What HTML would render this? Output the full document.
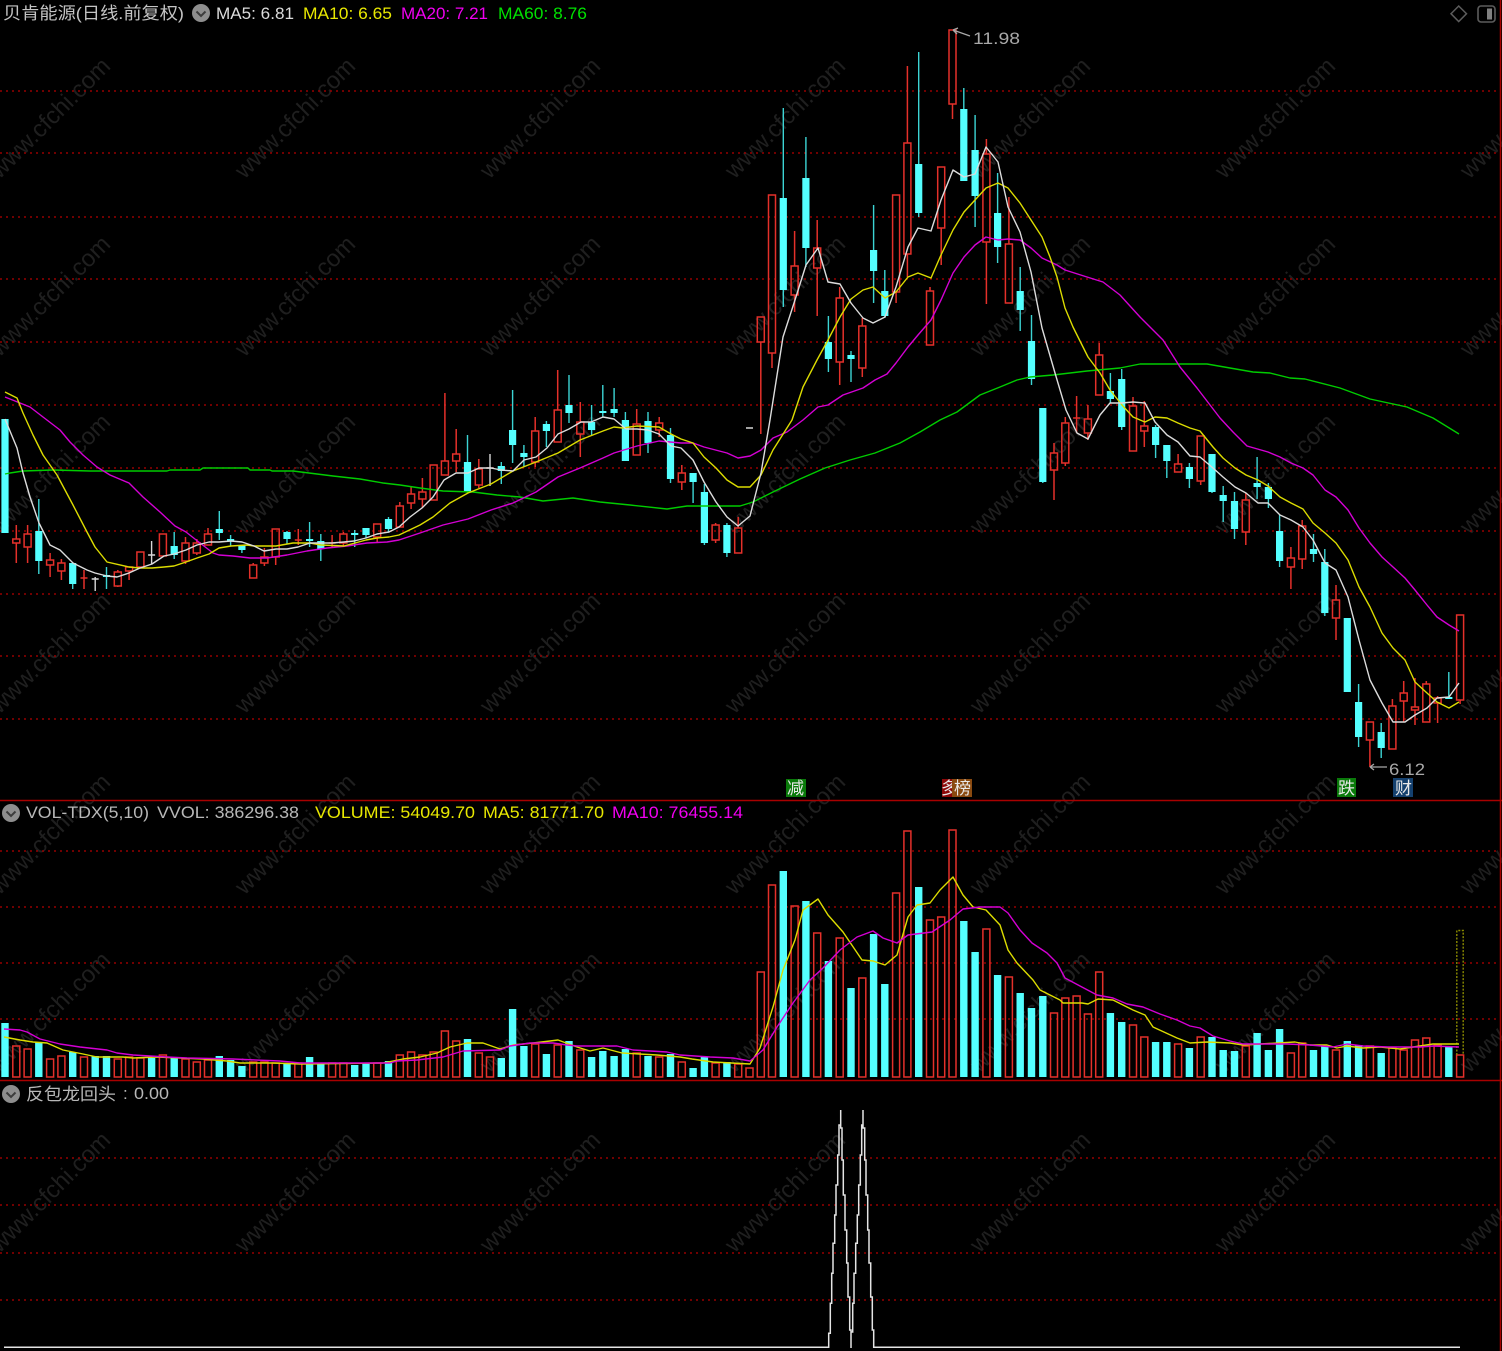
<!DOCTYPE html>
<html lang="zh">
<head>
<meta charset="utf-8">
<title>贝肯能源</title>
<style>
html,body{margin:0;padding:0;background:#000;width:1502px;height:1351px;overflow:hidden}
svg{display:block}
text{font-family:"Liberation Sans","Noto Sans CJK SC",sans-serif;font-size:17px}
.w{font-size:24px;fill:#1f1f1f}
path{fill:none}
</style>
</head>
<body>
<svg width="1502" height="1351" viewBox="0 0 1502 1351" xmlns="http://www.w3.org/2000/svg">
<rect width="1502" height="1351" fill="#000"/>
<!-- watermarks -->
<g transform="translate(-5 0)">
<g transform="translate(55 118) rotate(-45)"><text class="w" text-anchor="middle" y="8">www.cfchi.com</text></g>
<g transform="translate(300 118) rotate(-45)"><text class="w" text-anchor="middle" y="8">www.cfchi.com</text></g>
<g transform="translate(545 118) rotate(-45)"><text class="w" text-anchor="middle" y="8">www.cfchi.com</text></g>
<g transform="translate(790 118) rotate(-45)"><text class="w" text-anchor="middle" y="8">www.cfchi.com</text></g>
<g transform="translate(1035 118) rotate(-45)"><text class="w" text-anchor="middle" y="8">www.cfchi.com</text></g>
<g transform="translate(1280 118) rotate(-45)"><text class="w" text-anchor="middle" y="8">www.cfchi.com</text></g>
<g transform="translate(1525 118) rotate(-45)"><text class="w" text-anchor="middle" y="8">www.cfchi.com</text></g>
<g transform="translate(55 296) rotate(-45)"><text class="w" text-anchor="middle" y="8">www.cfchi.com</text></g>
<g transform="translate(300 296) rotate(-45)"><text class="w" text-anchor="middle" y="8">www.cfchi.com</text></g>
<g transform="translate(545 296) rotate(-45)"><text class="w" text-anchor="middle" y="8">www.cfchi.com</text></g>
<g transform="translate(790 296) rotate(-45)"><text class="w" text-anchor="middle" y="8">www.cfchi.com</text></g>
<g transform="translate(1035 296) rotate(-45)"><text class="w" text-anchor="middle" y="8">www.cfchi.com</text></g>
<g transform="translate(1280 296) rotate(-45)"><text class="w" text-anchor="middle" y="8">www.cfchi.com</text></g>
<g transform="translate(1525 296) rotate(-45)"><text class="w" text-anchor="middle" y="8">www.cfchi.com</text></g>
<g transform="translate(55 474) rotate(-45)"><text class="w" text-anchor="middle" y="8">www.cfchi.com</text></g>
<g transform="translate(300 474) rotate(-45)"><text class="w" text-anchor="middle" y="8">www.cfchi.com</text></g>
<g transform="translate(545 474) rotate(-45)"><text class="w" text-anchor="middle" y="8">www.cfchi.com</text></g>
<g transform="translate(790 474) rotate(-45)"><text class="w" text-anchor="middle" y="8">www.cfchi.com</text></g>
<g transform="translate(1035 474) rotate(-45)"><text class="w" text-anchor="middle" y="8">www.cfchi.com</text></g>
<g transform="translate(1280 474) rotate(-45)"><text class="w" text-anchor="middle" y="8">www.cfchi.com</text></g>
<g transform="translate(1525 474) rotate(-45)"><text class="w" text-anchor="middle" y="8">www.cfchi.com</text></g>
<g transform="translate(55 653) rotate(-45)"><text class="w" text-anchor="middle" y="8">www.cfchi.com</text></g>
<g transform="translate(300 653) rotate(-45)"><text class="w" text-anchor="middle" y="8">www.cfchi.com</text></g>
<g transform="translate(545 653) rotate(-45)"><text class="w" text-anchor="middle" y="8">www.cfchi.com</text></g>
<g transform="translate(790 653) rotate(-45)"><text class="w" text-anchor="middle" y="8">www.cfchi.com</text></g>
<g transform="translate(1035 653) rotate(-45)"><text class="w" text-anchor="middle" y="8">www.cfchi.com</text></g>
<g transform="translate(1280 653) rotate(-45)"><text class="w" text-anchor="middle" y="8">www.cfchi.com</text></g>
<g transform="translate(1525 653) rotate(-45)"><text class="w" text-anchor="middle" y="8">www.cfchi.com</text></g>
<g transform="translate(55 834) rotate(-45)"><text class="w" text-anchor="middle" y="8">www.cfchi.com</text></g>
<g transform="translate(300 834) rotate(-45)"><text class="w" text-anchor="middle" y="8">www.cfchi.com</text></g>
<g transform="translate(545 834) rotate(-45)"><text class="w" text-anchor="middle" y="8">www.cfchi.com</text></g>
<g transform="translate(790 834) rotate(-45)"><text class="w" text-anchor="middle" y="8">www.cfchi.com</text></g>
<g transform="translate(1035 834) rotate(-45)"><text class="w" text-anchor="middle" y="8">www.cfchi.com</text></g>
<g transform="translate(1280 834) rotate(-45)"><text class="w" text-anchor="middle" y="8">www.cfchi.com</text></g>
<g transform="translate(1525 834) rotate(-45)"><text class="w" text-anchor="middle" y="8">www.cfchi.com</text></g>
<g transform="translate(55 1012) rotate(-45)"><text class="w" text-anchor="middle" y="8">www.cfchi.com</text></g>
<g transform="translate(300 1012) rotate(-45)"><text class="w" text-anchor="middle" y="8">www.cfchi.com</text></g>
<g transform="translate(545 1012) rotate(-45)"><text class="w" text-anchor="middle" y="8">www.cfchi.com</text></g>
<g transform="translate(790 1012) rotate(-45)"><text class="w" text-anchor="middle" y="8">www.cfchi.com</text></g>
<g transform="translate(1035 1012) rotate(-45)"><text class="w" text-anchor="middle" y="8">www.cfchi.com</text></g>
<g transform="translate(1280 1012) rotate(-45)"><text class="w" text-anchor="middle" y="8">www.cfchi.com</text></g>
<g transform="translate(1525 1012) rotate(-45)"><text class="w" text-anchor="middle" y="8">www.cfchi.com</text></g>
<g transform="translate(55 1192) rotate(-45)"><text class="w" text-anchor="middle" y="8">www.cfchi.com</text></g>
<g transform="translate(300 1192) rotate(-45)"><text class="w" text-anchor="middle" y="8">www.cfchi.com</text></g>
<g transform="translate(545 1192) rotate(-45)"><text class="w" text-anchor="middle" y="8">www.cfchi.com</text></g>
<g transform="translate(790 1192) rotate(-45)"><text class="w" text-anchor="middle" y="8">www.cfchi.com</text></g>
<g transform="translate(1035 1192) rotate(-45)"><text class="w" text-anchor="middle" y="8">www.cfchi.com</text></g>
<g transform="translate(1280 1192) rotate(-45)"><text class="w" text-anchor="middle" y="8">www.cfchi.com</text></g>
<g transform="translate(1525 1192) rotate(-45)"><text class="w" text-anchor="middle" y="8">www.cfchi.com</text></g>
</g>
<!-- grid -->
<path stroke="#960000" stroke-width="1.5" stroke-dasharray="2 4" d="M0 91H1498M0 153H1498M0 217H1498M0 279H1498M0 342H1498M0 405H1498M0 468H1498M0 531H1498M0 594H1498M0 656H1498M0 719H1498M0 851H1498M0 907H1498M0 963H1498M0 1019H1498M0 1158H1498M0 1205H1498M0 1253H1498M0 1300H1498"/>
<!-- panel borders -->
<path stroke="#a80000" stroke-width="1.5" d="M0 800.5H1502M0 1080.5H1502M1500.5 0V1351"/>

<!-- cyan wicks -->
<path stroke="#3cd4d4" stroke-width="1.4" d="M38.8 499V574M72.7 563V589M106.5 567V589M174.2 532V559M219.3 511V540M230.6 535V546M241.9 545V553M287 531V544M309.6 522V547M320.8 534V561M354.7 530V547M366 528V538M388.5 517V532M467.5 435V493M501.3 462V484M512.6 390V463M523.9 445V467M546.4 421V447M569 375V423M591.6 405V435M602.8 385V417M614.1 388V417M625.4 412V461M648 412V453M670.5 428V483M693.1 473V503M704.4 484V545M726.9 523V557M783.3 108V307M805.9 137V267M828.4 316V372M851 351V382M873.6 205V303M884.8 270V318M918.7 52V217M963.8 88V181M975.1 115V227M997.6 173V263M1020.2 267V331M1031.5 315V385M1042.8 408V483M1110.4 373V403M1121.7 369V430M1155.6 425V458M1166.8 445V478M1189.4 463V488M1212 454V493M1223.2 486V522M1234.5 492V539M1257.1 457V499M1268.4 483V508M1279.6 515V567M1313.5 534V562M1324.8 549V616M1347.3 618V692M1358.6 684V747M1381.2 723V758M1448.8 672V698"/>
<!-- cyan bodies -->
<path stroke="#54ffff" stroke-width="7.2" d="M5 419V533M38.8 531V561M72.7 563V584M106.5 575V577M174.2 546V555M219.3 529V533M230.6 539V541M241.9 545V550M287 532V539M309.6 539V541M320.8 541V549M354.7 533V535M366 528V535M388.5 519V529M467.5 462V492M501.3 466V471M512.6 430V445M523.9 453V457M546.4 424V431M569 405V413M591.6 422V430M602.8 411V413M614.1 409V413M625.4 420V461M648 421V443M670.5 435V479M693.1 473V482M704.4 492V543M726.9 525V553M783.3 198V290M805.9 178V248M828.4 342V359M851 355V359M873.6 250V271M884.8 291V316M918.7 164V213M963.8 109V181M975.1 150V196M997.6 213V247M1020.2 291V310M1031.5 341V379M1042.8 408V482M1110.4 391V399M1121.7 379V427M1155.6 427V445M1166.8 445V461M1189.4 467V479M1212 454V492M1223.2 495V501M1234.5 501V529M1257.1 483V487M1268.4 487V499M1279.6 531V561M1313.5 549V554M1324.8 562V613M1347.3 618V692M1358.6 702V737M1381.2 732V748M1448.8 697V699"/>
<!-- white dojis -->
<path stroke="#d8d8d8" stroke-width="1.4" d="M95.2 577V591M91.7 579H98.7M151.6 541V564M148.1 555H155.1M490 454V486M486.5 468H493.5M746 428H753"/>
<!-- red candles -->
<path stroke="#e4302a" stroke-width="1.5" d="M16.3 525V539M16.3 543V563M12.8 539h7V543h-7zM27.6 525V534M27.6 547V563M24.1 534h7V547h-7zM50.1 553V560M50.1 565V577M46.6 560h7V565h-7zM61.4 559V563M61.4 571V580M57.9 563h7V571h-7zM84 570V589M80.5 578h7M117.8 570V572M117.8 586V587M114.3 572h7V586h-7zM129.1 571V580M125.6 567h7V571h-7zM136.9 552h7V567h-7zM159.4 534h7V556h-7zM185.5 537V543M185.5 561V564M182 543h7V561h-7zM196.8 539V543M196.8 553V555M193.3 543h7V553h-7zM208 528V534M204.5 534h7V545h-7zM249.7 565h7V578h-7zM253.2 563V565M264.4 548V557M264.4 563V566M260.9 557h7V563h-7zM275.7 557V565M272.2 529h7V557h-7zM298.3 529V545M294.8 540h7M332.1 535V547M328.6 543h7M343.4 532V534M343.4 543V546M339.9 534h7V543h-7zM377.2 537V543M373.7 524h7V537h-7zM399.8 502V506M396.3 506h7V527h-7zM411.1 487V494M411.1 503V509M407.6 494h7V503h-7zM422.4 478V492M422.4 499V508M418.9 492h7V499h-7zM430.1 465h7V500h-7zM444.9 393V461M441.4 461h7V475h-7zM456.2 429V454M456.2 461V472M452.7 454h7V461h-7zM478.8 459V469M478.8 485V488M475.3 469h7V485h-7zM535.2 417V431M535.2 462V467M531.7 431h7V462h-7zM557.7 370V410M554.2 410h7V442h-7zM580.3 402V422M580.3 434V457M576.8 422h7V434h-7zM636.7 409V424M633.2 424h7V455h-7zM659.2 417V423M659.2 430V437M655.7 423h7V430h-7zM681.8 465V473M681.8 482V490M678.3 473h7V482h-7zM715.6 523V525M715.6 540V543M712.1 525h7V540h-7zM738.2 517V528M734.7 528h7V553h-7zM760.8 342V434M757.3 317h7V342h-7zM772 353V368M768.5 195h7V353h-7zM794.6 231V266M794.6 295V312M791.1 266h7V295h-7zM817.2 220V248M817.2 268V316M813.7 248h7V268h-7zM839.7 287V298M839.7 362V385M836.2 298h7V362h-7zM862.3 318V326M862.3 368V377M858.8 326h7V368h-7zM896.1 292V303M892.6 195h7V292h-7zM907.4 66V143M907.4 254V277M903.9 143h7V254h-7zM930 287V291M926.5 291h7V345h-7zM941.2 228V265M937.7 167h7V228h-7zM952.5 104V119M949 30h7V104h-7zM986.4 139V154M986.4 242V304M982.9 154h7V242h-7zM1008.9 197V244M1005.4 244h7V303h-7zM1054 443V453M1054 470V500M1050.5 453h7V470h-7zM1065.3 417V423M1065.3 463V466M1061.8 423h7V463h-7zM1076.6 396V433M1073.1 418h7M1087.9 405V419M1087.9 433V440M1084.4 419h7V433h-7zM1099.2 343V355M1095.7 355h7V395h-7zM1133 397V406M1129.5 406h7V451h-7zM1144.3 401V426M1144.3 431V447M1140.8 426h7V431h-7zM1178.1 454V464M1174.6 464h7V472h-7zM1200.7 481V485M1197.2 436h7V481h-7zM1245.8 493V500M1245.8 532V545M1242.3 500h7V532h-7zM1290.9 547V558M1290.9 567V589M1287.4 558h7V567h-7zM1302.2 520V526M1302.2 559V569M1298.7 526h7V559h-7zM1336 585V600M1336 618V640M1332.5 600h7V618h-7zM1369.9 740V767M1366.4 722h7V740h-7zM1392.4 699V706M1388.9 706h7V749h-7zM1403.7 681V693M1403.7 701V722M1400.2 693h7V701h-7zM1415 678V707M1415 710V725M1411.5 707h7V710h-7zM1426.3 681V684M1422.8 684h7V722h-7zM1437.6 696V698M1437.6 703V723M1434.1 698h7V703h-7zM1460.1 700V704M1456.6 615h7V700h-7z"/>

<!-- MA60 green -->
<path stroke="#00cc00" stroke-width="1.4" stroke-linejoin="round" d="M5 474L10 473L23 471L53 470L90 471L167 471L170 470L200 470L203 468L248 468L250 470L270 470L272 471L293 471L317 474L333 476L360 479L383 483L400 485L420 488L443 491L473 492L497 495L520 497L543 501L573 498L600 502L630 505L667 509L687 506L740 506L753 502L773 492L800 479L825 468L850 460L875 453L900 443L920 432L940 420L957 412L980 395L1000 387L1017 380L1030 377L1053 375L1087 371L1120 368L1140 364L1207 364L1253 372L1270 373L1290 378L1305 379L1340 388L1370 399L1407 407L1433 418L1459 434"/>
<!-- MA20 magenta -->
<path stroke="#d400d4" stroke-width="1.4" stroke-linejoin="round" d="M5 397L20 403L30 407L43 417L60 430L70 442L83 455L97 467L110 475L129 483L143 497L160 512L175 526L186 532L200 543L213 553L219 555L233 556L250 558L267 558L287 555L307 551L327 548L347 546L367 543L387 542L399 540L420 533L443 525L468 519L491 510L513 503L536 492L558 477L580 468L603 458L614 453L637 446L659 441L681 443L693 443L704 447L727 453L738 458L750 456L761 450L773 438L787 432L803 420L818 407L828 405L843 395L863 388L875 380L887 374L896 363L908 347L918 335L931 320L941 300L953 273L964 257L975 245L986 237L998 240L1008 239L1020 240L1031 248L1042 258L1057 265L1065 270L1087 277L1103 282L1120 295L1140 317L1163 340L1180 367L1197 388L1220 418L1233 432L1247 446L1268 452L1280 457L1291 463L1303 468L1313 475L1325 490L1336 497L1348 510L1359 528L1370 543L1382 557L1393 567L1405 578L1415 590L1427 605L1437 617L1449 625L1459 631"/>
<!-- MA10 yellow -->
<path stroke="#dcdc00" stroke-width="1.4" stroke-linejoin="round" d="M5 392L17 398L23 413L33 435L43 455L57 475L73 505L87 532L95 547L107 562L129 567L140 568L152 568L164 567L174 566L186 562L197 558L209 554L219 548L231 546L247 545L254 546L276 546L293 543L310 543L321 545L344 546L366 540L377 538L389 537L399 535L420 525L433 517L450 503L468 493L491 484L513 471L536 462L558 453L580 440L603 431L614 427L623 428L637 426L659 427L671 434L681 439L693 443L704 457L716 468L727 480L738 487L750 487L761 475L773 450L792 420L803 387L817 360L828 340L840 317L851 299L863 290L873 287L885 298L896 292L908 277L918 273L931 278L941 255L953 230L964 212L975 200L986 188L998 183L1008 188L1020 203L1031 220L1042 237L1050 257L1057 277L1065 308L1073 327L1088 357L1100 373L1110 390L1122 405L1133 417L1145 422L1155 417L1167 418L1178 423L1190 428L1200 431L1213 447L1223 458L1235 468L1246 475L1258 480L1268 486L1280 497L1291 503L1303 509L1313 523L1325 533L1336 543L1348 560L1359 587L1370 607L1382 633L1393 648L1405 660L1415 682L1427 693L1437 702L1449 708L1459 702"/>
<!-- MA5 white -->
<path stroke="#dcdcdc" stroke-width="1.4" stroke-linejoin="round" d="M5 419L17 448L23 473L30 497L39 523L50 545L60 550L73 563L87 570L95 573L107 576L117 577L129 573L140 568L152 564L164 556L174 554L186 550L197 545L209 542L219 542L231 541L242 542L254 546L264 551L276 549L287 549L298 547L310 543L321 543L332 543L344 542L354 541L366 538L377 534L389 532L399 527L410 517L422 508L433 497L444 480L456 473L468 473L479 468L491 468L501 470L513 471L524 460L536 457L547 448L558 434L569 429L581 422L591 422L603 417L614 419L626 429L637 429L648 430L659 434L671 446L681 448L693 460L704 482L716 502L727 517L738 526L750 516L761 473L770 420L783 337L795 300L806 265L818 248L828 282L840 284L851 303L863 318L873 323L885 317L896 287L908 247L918 228L931 231L941 200L953 170L964 177L975 174L986 147L998 162L1008 207L1020 232L1031 272L1042 328L1055 373L1066 410L1077 433L1088 439L1100 415L1110 403L1122 403L1133 402L1145 403L1155 422L1167 435L1178 442L1190 456L1200 457L1213 468L1223 477L1235 487L1246 493L1258 503L1268 503L1280 515L1291 520L1303 527L1313 540L1325 563L1336 570L1348 597L1359 640L1370 680L1382 703L1393 722L1405 722L1415 715L1427 708L1437 698L1449 697L1459 683"/>

<!-- price labels -->
<path stroke="#a8a8a8" stroke-width="1.3" d="M953 30L970 36M953 30L958 28M953 30L957 34M1370 767H1387M1370 767L1374 764M1370 767L1374 770"/>
<text x="973" y="44" fill="#a8a8a8" textLength="47" lengthAdjust="spacingAndGlyphs">11.98</text>
<text x="1389" y="775" fill="#a8a8a8" textLength="36" lengthAdjust="spacingAndGlyphs">6.12</text>

<!-- tags -->
<rect x="786" y="779" width="20" height="18" fill="#0a7a0a"/>
<text x="787" y="794" fill="#e8e8e8">减</text>
<rect x="942" y="779" width="14" height="18" fill="#8c0808"/>
<text x="941" y="794" fill="#e8e8e8">多</text>
<rect x="952" y="779" width="20" height="18" fill="#8a4a10"/>
<text x="954" y="794" fill="#e8e8e8">榜</text>
<rect x="1337" y="778" width="19" height="19" fill="#0a7a0a"/>
<text x="1338" y="794" fill="#e8e8e8">跌</text>
<rect x="1393" y="778" width="20" height="19" fill="#14406e"/>
<text x="1395" y="794" fill="#e8e8e8">财</text>

<!-- volume cyan -->
<path stroke="#54ffff" stroke-width="7.4" d="M5 1023V1077M38.8 1042V1077M72.7 1052V1077M95.2 1056V1077M106.5 1056V1077M151.6 1058V1077M174.2 1058V1077M219.3 1056V1077M230.6 1060V1077M241.9 1066V1077M287 1063V1077M309.6 1057V1077M320.8 1063V1077M354.7 1065V1077M366 1063V1077M388.5 1061V1077M467.5 1039V1077M501.3 1058V1077M512.6 1009V1077M523.9 1046V1077M546.4 1054V1077M569 1041V1077M591.6 1057V1077M602.8 1051V1077M614.1 1056V1077M625.4 1049V1077M648 1056V1077M670.5 1054V1077M693.1 1068V1077M704.4 1057V1077M726.9 1062V1077M783.3 871V1077M805.9 901V1077M828.4 961V1077M851 988V1077M873.6 934V1077M884.8 984V1077M918.7 887V1077M963.8 921V1077M975.1 952V1077M997.6 975V1077M1020.2 993V1077M1031.5 1008V1077M1042.8 996V1077M1110.4 1013V1077M1121.7 1022V1077M1155.6 1042V1077M1166.8 1042V1077M1189.4 1048V1077M1212 1037V1077M1223.2 1050V1077M1234.5 1051V1077M1257.1 1033V1077M1268.4 1050V1077M1279.6 1029V1077M1313.5 1050V1077M1324.8 1046V1077M1347.3 1041V1077M1358.6 1045V1077M1381.2 1053V1077M1448.8 1046V1077"/>
<!-- volume red -->
<path stroke="#e4302a" stroke-width="1.5" d="M12.8 1077V1046h7V1077zM24.1 1077V1049h7V1077zM46.6 1077V1059h7V1077zM57.9 1077V1056h7V1077zM80.5 1077V1057h7V1077zM114.3 1077V1059h7V1077zM125.6 1077V1057h7V1077zM136.9 1077V1058h7V1077zM159.4 1077V1055h7V1077zM182 1077V1059h7V1077zM193.3 1077V1062h7V1077zM204.5 1077V1060h7V1077zM249.7 1077V1062h7V1077zM260.9 1077V1062h7V1077zM272.2 1077V1063h7V1077zM294.8 1077V1063h7V1077zM328.6 1077V1063h7V1077zM339.9 1077V1063h7V1077zM373.7 1077V1063h7V1077zM396.3 1077V1055h7V1077zM407.6 1077V1052h7V1077zM418.9 1077V1055h7V1077zM430.1 1077V1052h7V1077zM441.4 1077V1031h7V1077zM452.7 1077V1041h7V1077zM475.3 1077V1053h7V1077zM486.5 1077V1057h7V1077zM531.7 1077V1044h7V1077zM554.2 1077V1045h7V1077zM576.8 1077V1050h7V1077zM633.2 1077V1053h7V1077zM655.7 1077V1057h7V1077zM678.3 1077V1062h7V1077zM712.1 1077V1063h7V1077zM734.7 1077V1064h7V1077zM746 1077V1068h7V1077zM757.3 1077V972h7V1077zM768.5 1077V885h7V1077zM791.1 1077V906h7V1077zM813.7 1077V933h7V1077zM836.2 1077V938h7V1077zM858.8 1077V978h7V1077zM892.6 1077V893h7V1077zM903.9 1077V831h7V1077zM926.5 1077V920h7V1077zM937.7 1077V917h7V1077zM949 1077V830h7V1077zM982.9 1077V929h7V1077zM1005.4 1077V977h7V1077zM1050.5 1077V1013h7V1077zM1061.8 1077V998h7V1077zM1073.1 1077V996h7V1077zM1084.4 1077V1014h7V1077zM1095.7 1077V972h7V1077zM1129.5 1077V1025h7V1077zM1140.8 1077V1037h7V1077zM1174.6 1077V1044h7V1077zM1197.2 1077V1037h7V1077zM1242.3 1077V1046h7V1077zM1287.4 1077V1053h7V1077zM1298.7 1077V1043h7V1077zM1332.5 1077V1050h7V1077zM1366.4 1077V1046h7V1077zM1388.9 1077V1048h7V1077zM1400.2 1077V1050h7V1077zM1411.5 1077V1040h7V1077zM1422.8 1077V1038h7V1077zM1434.1 1077V1045h7V1077zM1456.6 1077V1055h7V1077z"/>
<path stroke="#8a8a00" stroke-width="1.4" stroke-dasharray="2 1.5" d="M1456.8 1055V930.5H1463.2V1055"/>
<!-- vol MA5 -->
<path stroke="#dcdc00" stroke-width="1.4" stroke-linejoin="round" d="M4 1037L20 1040L33 1042L47 1043L63 1050L83 1054L97 1057L123 1057L133 1058L157 1057L180 1058L203 1059L227 1061L240 1063L273 1063L300 1064L383 1063L403 1059L420 1057L437 1053L450 1047L467 1043L483 1043L500 1049L513 1045L533 1043L550 1041L558 1040L577 1047L590 1051L603 1048L622 1053L657 1055L680 1057L692 1059L713 1062L750 1064L760 1048L773 1007L783 970L795 940L803 910L818 899L828 915L843 932L862 960L873 961L885 965L897 955L908 917L917 905L930 903L940 890L953 877L963 895L973 907L986 910L1000 925L1008 950L1017 963L1033 980L1040 990L1060 1000L1063 1003L1082 1003L1088 1004L1098 999L1113 1000L1133 1010L1145 1015L1153 1027L1177 1038L1190 1043L1207 1042L1230 1043L1243 1045L1295 1042L1310 1045L1327 1045L1337 1048L1347 1046L1363 1048L1380 1047L1400 1049L1433 1044L1459 1044"/>
<!-- vol MA10 -->
<path stroke="#d400d4" stroke-width="1.4" stroke-linejoin="round" d="M4 1029L20 1030L27 1032L40 1039L60 1044L80 1047L107 1050L117 1053L133 1055L167 1057L187 1058L233 1059L280 1061L300 1063L390 1063L397 1061L417 1060L443 1057L463 1051L500 1050L510 1046L530 1043L553 1043L567 1045L577 1046L617 1046L633 1050L667 1052L680 1055L710 1057L733 1058L750 1061L763 1050L777 1027L793 1003L810 980L823 968L840 950L857 937L873 931L883 938L897 943L908 935L932 932L950 920L963 909L980 907L1000 907L1008 913L1020 930L1032 943L1047 953L1057 963L1065 978L1080 986L1097 995L1113 998L1127 1004L1143 1007L1160 1014L1177 1020L1190 1026L1200 1028L1213 1036L1230 1041L1243 1044L1267 1044L1287 1044L1310 1045L1333 1047L1347 1044L1363 1046L1388 1047L1420 1047L1433 1046L1459 1047"/>

<!-- bottom indicator -->
<path stroke="#e4e4e4" stroke-width="1.5" d="M4 1347.3H828.7V1333.3H830.3V1303.3H831.7V1273.3H833V1243.3H834.7V1215H836V1185H837.7V1155H839V1125H840.7V1110V1128H842V1160H843.3V1195H845V1230H846.7V1263H848V1297H849.7V1330H851V1348V1332H852.7V1303.3H854V1273.3H855.7V1243.3H857.3V1215H858.7V1185H860.3V1155H861.7V1125H863V1110V1128H864.7V1160H866V1195H867.7V1230H869V1263H870.7V1297H872.3V1330H873.7V1347.3H1460"/>

<!-- headers -->
<text x="3" y="19" fill="#c4c4c4" textLength="181" lengthAdjust="spacingAndGlyphs">贝肯能源(日线.前复权)</text>
<circle cx="201" cy="13" r="9" fill="#8e8e8e"/>
<path stroke="#3c3c3c" stroke-width="2" d="M196.5 11.5L201 16L205.5 11.5"/>
<text x="216" y="19" fill="#dcdcdc" textLength="78" lengthAdjust="spacingAndGlyphs">MA5: 6.81</text>
<text x="303" y="19" fill="#e8e800" textLength="89" lengthAdjust="spacingAndGlyphs">MA10: 6.65</text>
<text x="401" y="19" fill="#f000f0" textLength="87" lengthAdjust="spacingAndGlyphs">MA20: 7.21</text>
<text x="498" y="19" fill="#00e000" textLength="89" lengthAdjust="spacingAndGlyphs">MA60: 8.76</text>

<circle cx="11" cy="813" r="9" fill="#8e8e8e"/>
<path stroke="#3c3c3c" stroke-width="2" d="M6.5 811.5L11 816L15.5 811.5"/>
<text x="26" y="818" fill="#b8b8b8" textLength="123" lengthAdjust="spacingAndGlyphs">VOL-TDX(5,10)</text>
<text x="157" y="818" fill="#b8b8b8" textLength="142" lengthAdjust="spacingAndGlyphs">VVOL: 386296.38</text>
<text x="315" y="818" fill="#e8e800" textLength="160" lengthAdjust="spacingAndGlyphs">VOLUME: 54049.70</text>
<text x="483" y="818" fill="#e8e800" textLength="121" lengthAdjust="spacingAndGlyphs">MA5: 81771.70</text>
<text x="612" y="818" fill="#f000f0" textLength="131" lengthAdjust="spacingAndGlyphs">MA10: 76455.14</text>

<circle cx="11" cy="1094" r="9" fill="#8e8e8e"/>
<path stroke="#3c3c3c" stroke-width="2" d="M6.5 1092.5L11 1097L15.5 1092.5"/>
<text x="26" y="1100" fill="#b8b8b8" textLength="90" lengthAdjust="spacingAndGlyphs">反包龙回头</text>
<text x="123" y="1099" fill="#b8b8b8">:</text>
<text x="134" y="1099" fill="#b8b8b8" textLength="35" lengthAdjust="spacingAndGlyphs">0.00</text>

<!-- top-right icons -->
<path stroke="#5c5c5c" stroke-width="1.5" d="M1458.7 6L1466.5 13.7L1458.7 21.5L1451 13.7Z"/>
<rect x="1478" y="6" width="17" height="16" rx="3" fill="none" stroke="#5c5c5c" stroke-width="1.6"/>
<rect x="1487" y="8.5" width="5" height="11" fill="#808080"/>
</svg>
</body>
</html>
